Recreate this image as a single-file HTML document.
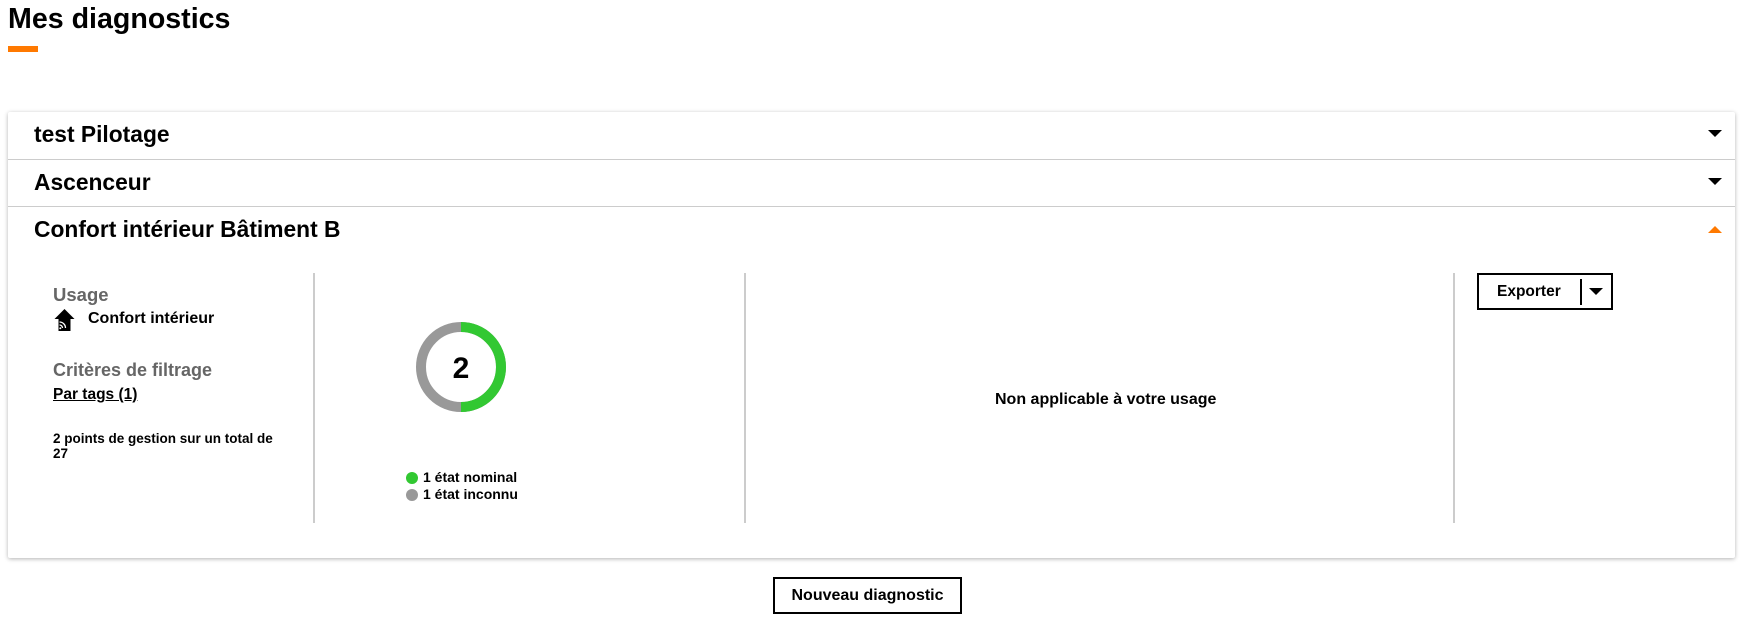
<!DOCTYPE html>
<html><head><meta charset="utf-8"><style>
*{margin:0;padding:0;box-sizing:border-box}
body{width:1760px;height:620px;background:#fff;font-family:"Liberation Sans",Arial,sans-serif;font-weight:bold;color:#000;position:relative;overflow:hidden}
.a{position:absolute;white-space:nowrap}
.card{position:absolute;left:8px;top:112px;width:1727px;height:446px;background:#fff;box-shadow:0 1px 4px rgba(0,0,0,.3);border-radius:2px}
.row{position:absolute;left:0;width:100%;height:47px;border-top:1px solid #ccc}
.row span{position:absolute;left:26px;top:9px;font-size:22.8px}
.tri{position:absolute;right:13px;width:0;height:0;border-left:7px solid transparent;border-right:7px solid transparent}
.vd{position:absolute;top:161px;width:2px;height:250px;background:#ccc}
</style></head><body>
<div class="a" style="left:8px;top:3px;font-size:28.6px">Mes diagnostics</div>
<div class="a" style="left:8px;top:46px;width:30px;height:6px;background:#ff7900"></div>
<div class="card">
 <div class="row" style="top:0;border-top:none"><span>test Pilotage</span><div class="tri" style="top:18px;border-top:7px solid #000"></div></div>
 <div class="row" style="top:47px"><span>Ascenceur</span><div class="tri" style="top:18px;border-top:7px solid #000"></div></div>
 <div class="row" style="top:94px"><span>Confort intérieur Bâtiment B</span><div class="tri" style="top:19px;border-bottom:7px solid #ff7900"></div></div>
 <div class="vd" style="left:305px"></div>
 <div class="vd" style="left:736px"></div>
 <div class="vd" style="left:1445px"></div>
 <div class="a" style="left:45px;top:172px;font-size:18.5px;color:#666">Usage</div>
 <svg class="a" style="left:45px;top:196px" width="23" height="24" viewBox="0 0 22 24"><path d="M11 1L1 11h4v12h12V11h4z" fill="#000"/><g fill="none" stroke="#fff" stroke-width="1.3"><path d="M6 14a6 6 0 0 1 6 6"/><path d="M6 17a3 3 0 0 1 3 3"/></g><circle cx="6.8" cy="20.2" r="1" fill="#fff"/></svg>
 <div class="a" style="left:80px;top:198px;font-size:16px">Confort intérieur</div>
 <div class="a" style="left:45px;top:248px;font-size:18px;color:#666">Critères de filtrage</div>
 <div class="a" style="left:45px;top:274px;font-size:15.5px;text-decoration:underline">Par tags (1)</div>
 <div class="a" style="left:45px;top:319px;font-size:13.5px;line-height:15px">2 points de gestion sur un total de<br>27</div>
 <svg class="a" style="left:403px;top:205px" width="100" height="100" viewBox="0 0 100 100"><circle cx="50" cy="50" r="40" fill="none" stroke="#999" stroke-width="10"/><path d="M50 10a40 40 0 0 1 0 80" fill="none" stroke="#32c832" stroke-width="10"/><text x="50" y="61" text-anchor="middle" font-size="30" font-weight="bold" font-family="Liberation Sans,sans-serif">2</text></svg>
 <div class="a" style="left:398px;top:360px;width:12px;height:12px;border-radius:50%;background:#32c832"></div>
 <div class="a" style="left:398px;top:377px;width:12px;height:12px;border-radius:50%;background:#999"></div>
 <div class="a" style="left:415px;top:357px;font-size:14px;line-height:17px">1 état nominal<br>1 état inconnu</div>
 <div class="a" style="left:987px;top:279px;font-size:16px">Non applicable à votre usage</div>
 <div class="a" style="left:1469px;top:161px;width:136px;height:37px;border:2px solid #000">
  <div class="a" style="left:18px;top:8px;font-size:15.5px">Exporter</div>
  <div class="a" style="left:101px;top:4px;width:2px;height:26px;background:#000"></div>
  <div class="a" style="left:110px;top:13px;border-left:7px solid transparent;border-right:7px solid transparent;border-top:7px solid #000"></div>
 </div>
</div>
<div class="a" style="left:773px;top:577px;width:189px;height:37px;border:2px solid #000;font-size:16px;text-align:center;line-height:33px">Nouveau diagnostic</div>
</body></html>
